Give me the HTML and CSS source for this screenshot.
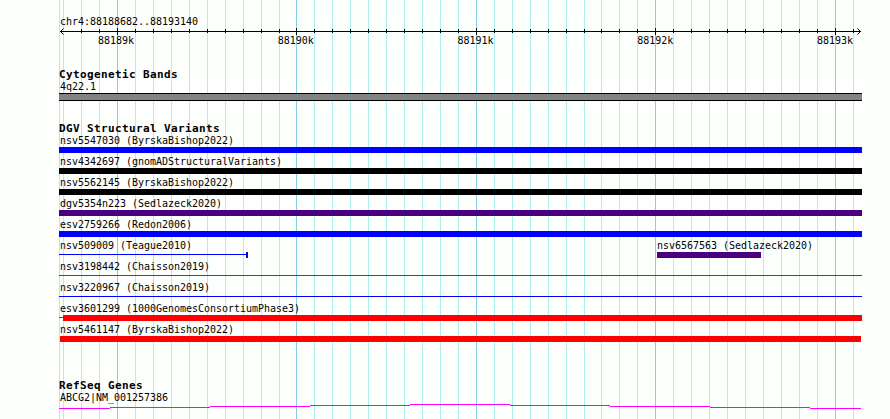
FILE: index.html
```html
<!DOCTYPE html>
<html lang="en">
<head>
    <meta charset="UTF-8">
    <meta name="viewport" content="width=device-width, initial-scale=1.0">
    <title>chr4:88188682..88193140</title>
    <link rel="stylesheet" href="styles.css">
</head>
<body>

<main class="browser">
    <svg class="grid" width="803" height="419" shape-rendering="crispEdges">
        <path class="minor" d="M0.5 0V419M4.5 0V419M22.5 0V419M40.5 0V419M76.5 0V419M94.5 0V419M112.5 0V419M130.5 0V419M148.5 0V419M166.5 0V419M184.5 0V419M202.5 0V419M220.5 0V419M255.5 0V419M273.5 0V419M291.5 0V419M309.5 0V419M327.5 0V419M345.5 0V419M363.5 0V419M381.5 0V419M399.5 0V419M435.5 0V419M453.5 0V419M471.5 0V419M489.5 0V419M507.5 0V419M525.5 0V419M542.5 0V419M560.5 0V419M578.5 0V419M614.5 0V419M632.5 0V419M650.5 0V419M668.5 0V419M686.5 0V419M704.5 0V419M722.5 0V419M740.5 0V419M758.5 0V419M794.5 0V419"/>
        <path class="major" d="M58.5 0V419M237.5 0V419M417.5 0V419M596.5 0V419M776.5 0V419"/>
    </svg>

    <header class="ruler">
        <div class="label">chr4:88188682..88193140</div>
        <svg class="axis" width="803" height="7">
            <path shape-rendering="crispEdges" d="M1 3.5H802M22.5 1V5M40.5 1V5M76.5 1V5M94.5 1V5M112.5 1V5M130.5 1V5M148.5 1V5M166.5 1V5M184.5 1V5M202.5 1V5M220.5 1V5M255.5 1V5M273.5 1V5M291.5 1V5M309.5 1V5M327.5 1V5M345.5 1V5M363.5 1V5M381.5 1V5M399.5 1V5M435.5 1V5M453.5 1V5M471.5 1V5M489.5 1V5M507.5 1V5M525.5 1V5M542.5 1V5M560.5 1V5M578.5 1V5M614.5 1V5M632.5 1V5M650.5 1V5M668.5 1V5M686.5 1V5M704.5 1V5M722.5 1V5M740.5 1V5M758.5 1V5M794.5 1V5"/>
            <path shape-rendering="crispEdges" d="M58.5 0V7M237.5 0V7M417.5 0V7M596.5 0V7M776.5 0V7"/>
            <path d="M4.5 0.5L1.5 3.5L4.5 6.5M798.5 0.5L801.5 3.5L798.5 6.5"/>
        </svg>
        <div class="ticks">
            <span>88189k</span>
            <span>88190k</span>
            <span>88191k</span>
            <span>88192k</span>
            <span>88193k</span>
        </div>
    </header>

    <section class="track">
        <h2>Cytogenetic Bands</h2>
        <div class="label">4q22.1</div>
        <div class="band"></div>
    </section>

    <section class="track">
        <h2>DGV Structural Variants</h2>
        <div class="row">
            <div class="label">nsv5547030 (ByrskaBishop2022)</div>
            <div class="bar blue"></div>
        </div>
        <div class="row">
            <div class="label">nsv4342697 (gnomADStructuralVariants)</div>
            <div class="bar black"></div>
        </div>
        <div class="row">
            <div class="label">nsv5562145 (ByrskaBishop2022)</div>
            <div class="bar black"></div>
        </div>
        <div class="row">
            <div class="label">dgv5354n223 (Sedlazeck2020)</div>
            <div class="bar indigo"></div>
        </div>
        <div class="row">
            <div class="label">esv2759266 (Redon2006)</div>
            <div class="bar blue"></div>
        </div>
        <div class="row split">
            <div class="variant teague">
                <div class="label">nsv509009 (Teague2010)</div>
                <div class="span">
                    <div class="line blue"></div>
                    <div class="cap blue"></div>
                </div>
            </div>
            <div class="variant">
                <div class="label">nsv6567563 (Sedlazeck2020)</div>
                <div class="bar indigo short"></div>
            </div>
        </div>
        <div class="row">
            <div class="label">nsv3198442 (Chaisson2019)</div>
            <div class="line red"></div>
        </div>
        <div class="row">
            <div class="label">nsv3220967 (Chaisson2019)</div>
            <div class="line blue"></div>
        </div>
        <div class="row">
            <div class="label">esv3601299 (1000GenomesConsortiumPhase3)</div>
            <div class="span">
                <div class="line lead red"></div>
                <div class="bar red"></div>
            </div>
        </div>
        <div class="row">
            <div class="label">nsv5461147 (ByrskaBishop2022)</div>
            <div class="bar red inset"></div>
        </div>
    </section>

    <section class="track genes">
        <h2>RefSeq Genes</h2>
        <div class="label">ABCG2|NM_001257386</div>
        <svg class="gene" width="803" height="5" shape-rendering="crispEdges">
            <path d="M0 4.5H51M51 3.5H151M151 2.5H251M251 1.5H351M351 0.5H451M451 1.5H551M551 2.5H651M651 3.5H751M751 4.5H802"/>
        </svg>
    </section>
</main>

</body>
</html>
```
FILE: styles.css
```css
body {
    margin: 0;
    background-color: #fdfffc;
    color: #000;
    font-family: 'DejaVu Sans Mono', 'Liberation Mono', monospace;
    font-size: 10px;
    line-height: 12px;
}

.browser {
    position: relative;
    width: 803px;
    height: 419px;
    margin-left: 59px;
    overflow: hidden;
}

svg {
    display: block;
    fill: none;
    stroke: #000;
}

/* grid lines run behind every track */
.grid {
    position: absolute;
    top: 0;
    left: 0;
    z-index: -1;
}

.grid .minor {
    stroke: #afeeee;
}

.grid .major {
    stroke: #87ceeb;
}

.label {
    height: 12px;
    padding-left: 1px;
    letter-spacing: -0.02px;
    white-space: nowrap;
}

.ruler {
    padding-top: 16px;
}

.ticks {
    display: flex;
    justify-content: space-between;
    height: 12px;
    margin-left: 39px;
    margin-right: 9px;
    letter-spacing: -0.02px;
}

.track {
    margin-top: 21px;
}

.genes {
    margin-top: 34px;
}

h2 {
    height: 13px;
    margin: 0;
    font-size: 11px;
    line-height: 13px;
    letter-spacing: 0.38px;
    white-space: nowrap;
}

.band {
    height: 6px;
    background-color: #848284;
    border-top: 1px solid #000;
    border-bottom: 1px solid #000;
}

.row {
    height: 21px;
}

.split {
    display: flex;
}

.teague {
    width: 597px;
}

.span {
    display: flex;
}

.bar {
    flex: 1;
    height: 6px;
}

.short {
    width: 104px;
    margin-left: 1px;
}

.inset {
    margin: 0 1px;
}

.line {
    height: 1px;
    margin-top: 2px;
}

.row > .line {
    margin-top: 0;
    transform: translateY(2px);
}

.teague .line {
    width: 187px;
}

.lead {
    width: 4px;
}

.cap {
    width: 2px;
    height: 6px;
}

.blue {
    background-color: #0000ff;
}

.black {
    background-color: #000;
}

.indigo {
    background-color: #4b0082;
}

.red {
    background-color: #ff0000;
}

.gene {
    stroke: #ff00ff;
}
```
